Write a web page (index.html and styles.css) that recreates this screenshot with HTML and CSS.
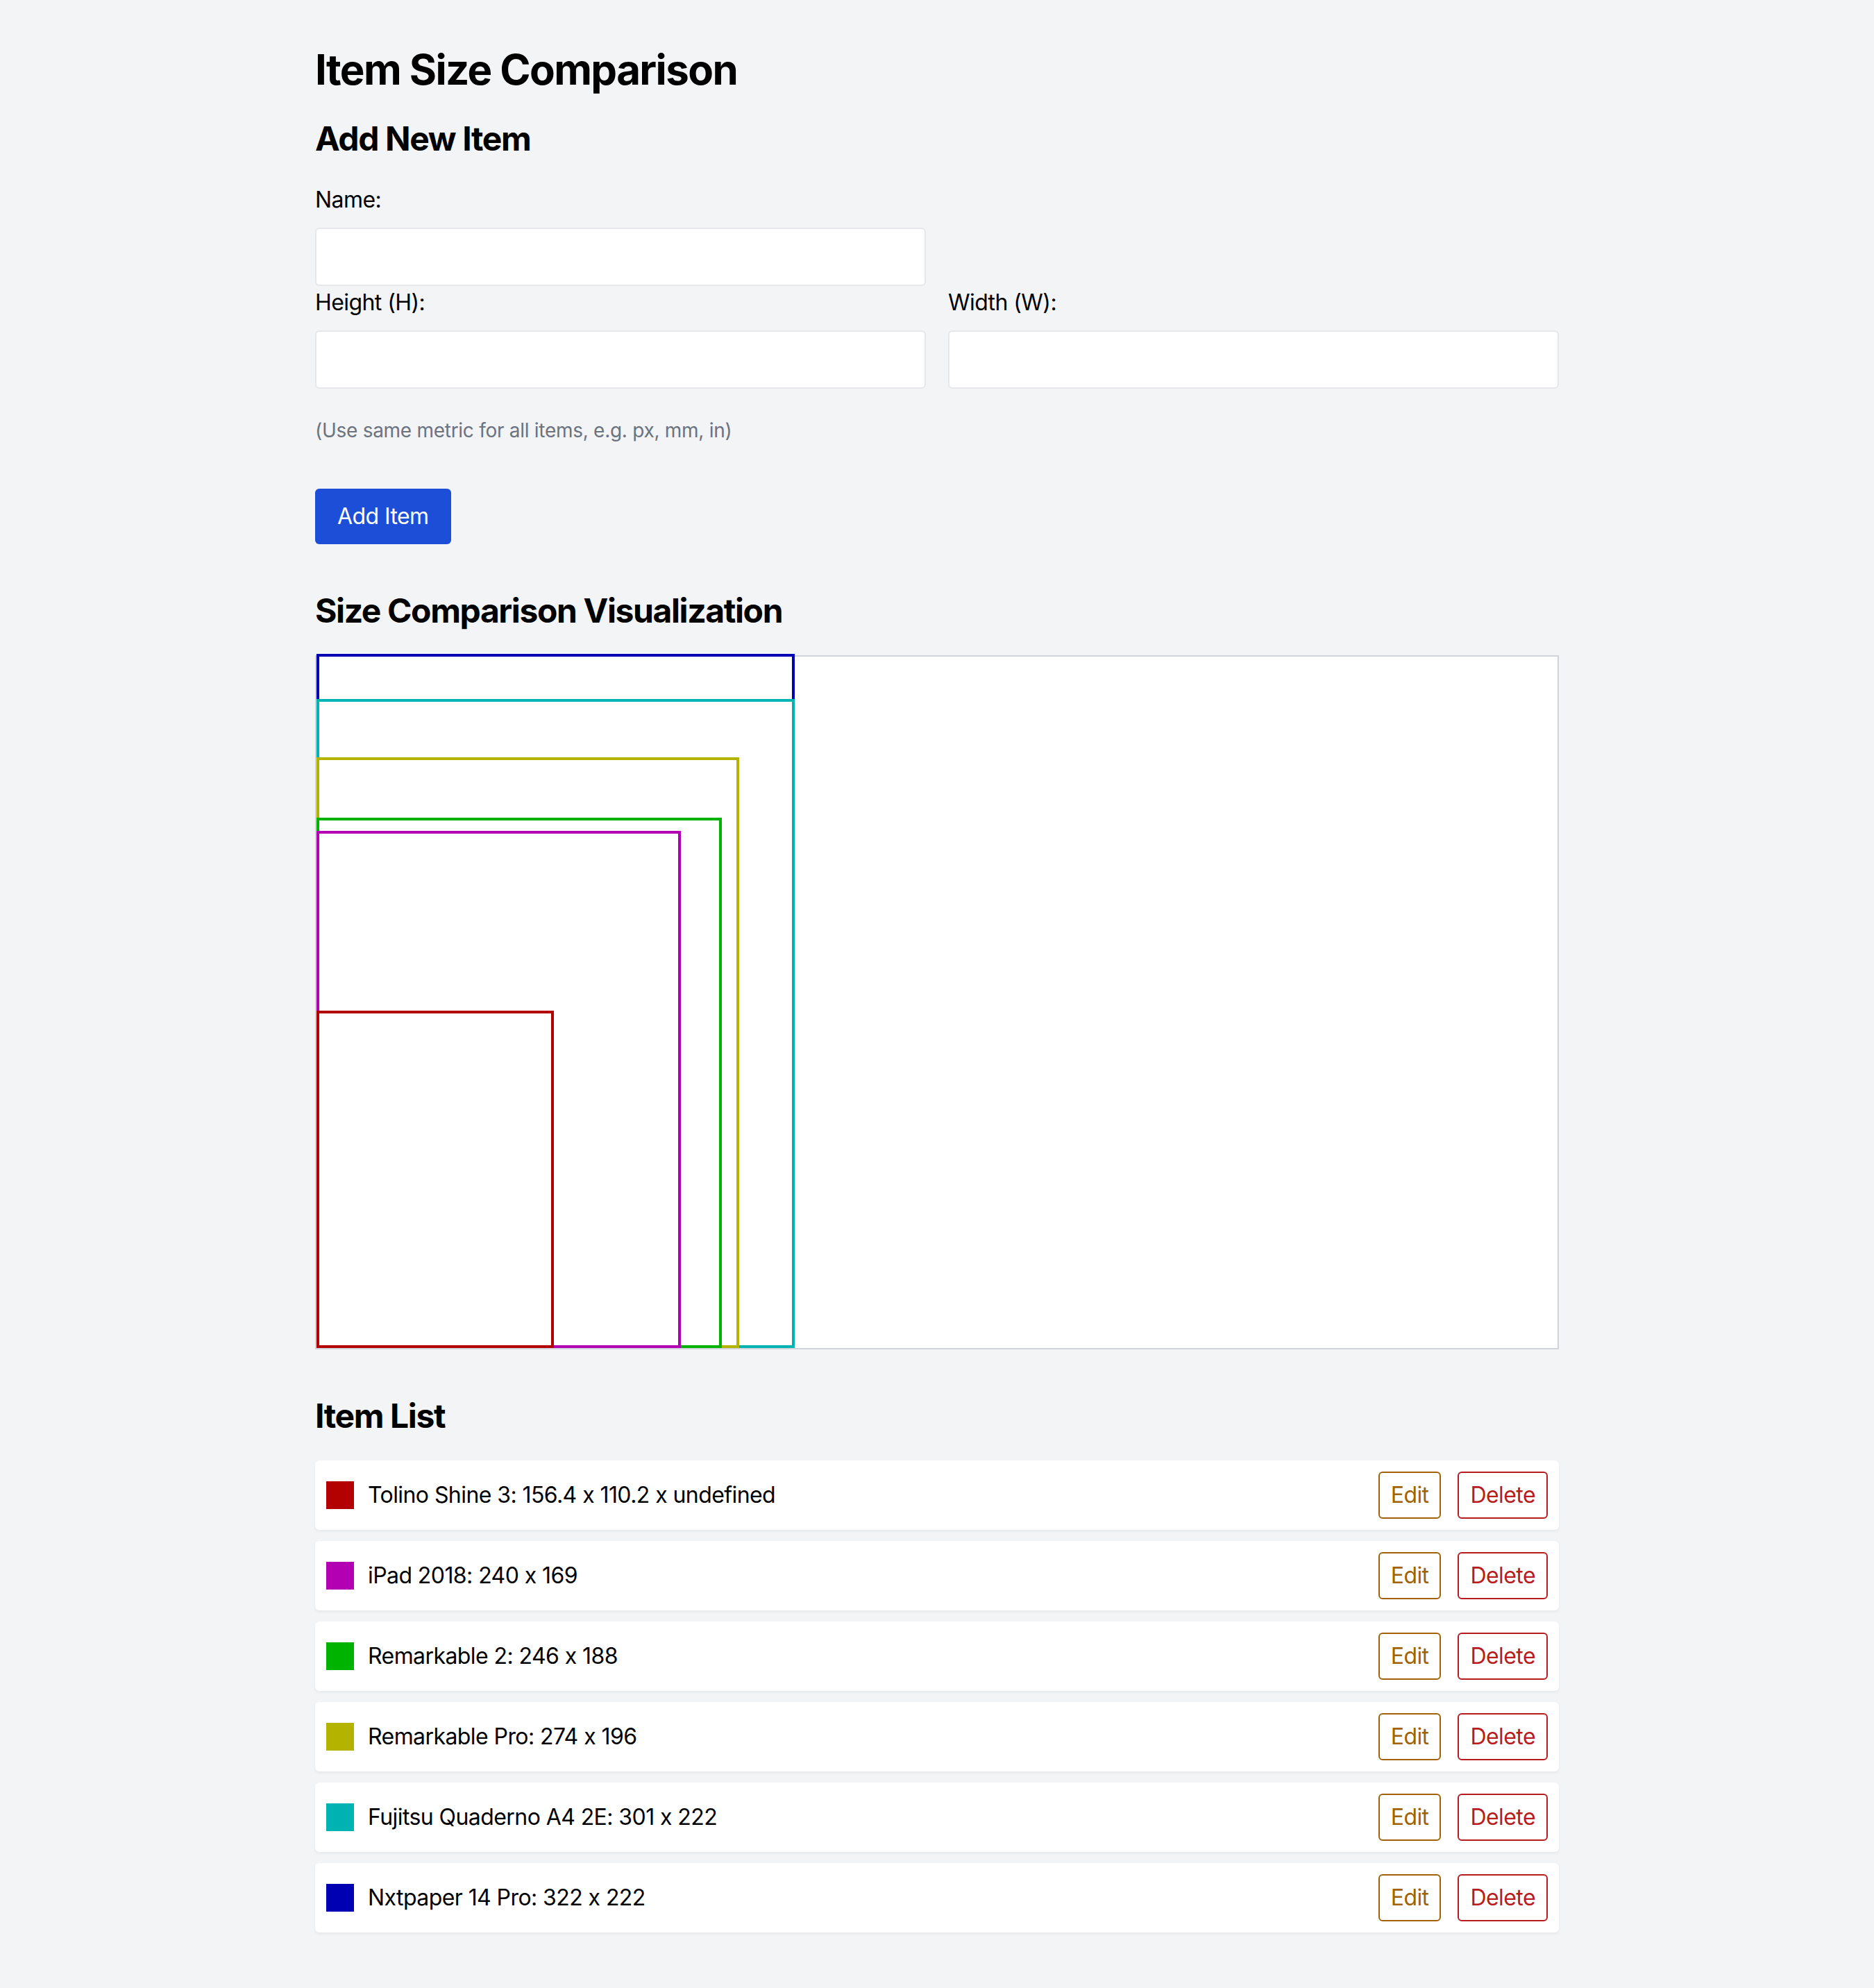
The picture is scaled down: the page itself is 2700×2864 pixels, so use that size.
FILE: index.html
```html
<!DOCTYPE html>
<html lang="en">
<head>
<meta charset="utf-8">
<title>Item Size Comparison</title>
<link rel="stylesheet" href="styles.css">
</head>
<body>
<main class="container">
  <h1 class="title">Item Size Comparison</h1>

  <section class="add-section">
    <h2 class="section-title">Add New Item</h2>
    <div class="form-grid">
      <div class="field">
        <label class="field-label" for="name">Name:</label>
        <input class="field-input" id="name" type="text">
      </div>
      <div class="field-spacer"></div>
      <div class="field">
        <label class="field-label" for="height">Height (H):</label>
        <input class="field-input" id="height" type="text">
      </div>
      <div class="field">
        <label class="field-label" for="width">Width (W):</label>
        <input class="field-input" id="width" type="text">
      </div>
    </div>
    <p class="hint">(Use same metric for all items, e.g. px, mm, in)</p>
    <button class="btn-primary" type="button">Add Item</button>
  </section>

  <section class="viz-section">
    <h2 class="section-title">Size Comparison Visualization</h2>
    <div class="viz-box">
      <div class="viz-rect" style="width:689.4px;height:1000px;border-color:rgb(0,0,179)"></div>
      <div class="viz-rect" style="width:689.4px;height:934.8px;border-color:rgb(0,179,179)"></div>
      <div class="viz-rect" style="width:608.7px;height:850.9px;border-color:rgb(179,179,0)"></div>
      <div class="viz-rect" style="width:583.9px;height:764px;border-color:rgb(0,179,0)"></div>
      <div class="viz-rect" style="width:524.8px;height:745.3px;border-color:rgb(179,0,179)"></div>
      <div class="viz-rect" style="width:342.2px;height:485.7px;border-color:rgb(179,0,0)"></div>
    </div>
  </section>

  <section class="list-section">
    <h2 class="section-title">Item List</h2>
    <ul class="item-list">
      <li class="item-card">
        <span class="swatch" style="background:rgb(179,0,0)"></span>
        <span class="item-text">Tolino Shine 3: 156.4 x 110.2 x undefined</span>
        <button class="btn-edit" type="button">Edit</button>
        <button class="btn-delete" type="button">Delete</button>
      </li>
      <li class="item-card">
        <span class="swatch" style="background:rgb(179,0,179)"></span>
        <span class="item-text">iPad 2018: 240 x 169</span>
        <button class="btn-edit" type="button">Edit</button>
        <button class="btn-delete" type="button">Delete</button>
      </li>
      <li class="item-card">
        <span class="swatch" style="background:rgb(0,179,0)"></span>
        <span class="item-text">Remarkable 2: 246 x 188</span>
        <button class="btn-edit" type="button">Edit</button>
        <button class="btn-delete" type="button">Delete</button>
      </li>
      <li class="item-card">
        <span class="swatch" style="background:rgb(179,179,0)"></span>
        <span class="item-text">Remarkable Pro: 274 x 196</span>
        <button class="btn-edit" type="button">Edit</button>
        <button class="btn-delete" type="button">Delete</button>
      </li>
      <li class="item-card">
        <span class="swatch" style="background:rgb(0,179,179)"></span>
        <span class="item-text">Fujitsu Quaderno A4 2E: 301 x 222</span>
        <button class="btn-edit" type="button">Edit</button>
        <button class="btn-delete" type="button">Delete</button>
      </li>
      <li class="item-card">
        <span class="swatch" style="background:rgb(0,0,179)"></span>
        <span class="item-text">Nxtpaper 14 Pro: 322 x 222</span>
        <button class="btn-edit" type="button">Edit</button>
        <button class="btn-delete" type="button">Delete</button>
      </li>
    </ul>
  </section>
</main>
</body>
</html>
```

FILE: styles.css
```css
* {
  box-sizing: border-box;
}

html {
  background: #f3f4f6;
}

body {
  margin: 0;
  background: #f3f4f6;
  color: #000;
  font-family: Inter, "Noto Sans", "Liberation Sans", sans-serif;
  font-feature-settings: "calt" 0;
  font-size: 32px;
  line-height: 48px;
  letter-spacing: -0.018em;
}

.container {
  width: 1792px;
  margin: 0 auto;
  padding: 64px 0 80px;
}

.title {
  margin: 0 0 32px;
  font-size: 60px;
  line-height: 72px;
  font-weight: 700;
  letter-spacing: -0.027em;
}

.section-title {
  margin: 0 0 32px;
  font-size: 48px;
  line-height: 64px;
  font-weight: 700;
  letter-spacing: -0.029em;
}

.form-grid {
  display: grid;
  grid-template-columns: 1fr 1fr;
  column-gap: 32px;
  row-gap: 0;
}

.field-label {
  display: block;
  margin-bottom: 16px;
  font-size: 32px;
  line-height: 48px;
}

.field-input {
  display: block;
  width: 100%;
  height: 84px;
  border: 2px solid #e5e7eb;
  border-radius: 6px;
  background: #fff;
  font: inherit;
  padding: 0 16px;
}

.hint {
  margin: 40px 0 64px;
  font-size: 28px;
  line-height: 40px;
  color: #6b7280;
  letter-spacing: -0.01em;
}

.btn-primary {
  height: 80px;
  padding: 0 32px;
  border: none;
  border-radius: 6px;
  background: #1d4ed8;
  color: #fff;
  font: inherit;
  font-size: 32px;
  line-height: 48px;
  letter-spacing: -0.018em;
}

.viz-section,
.list-section {
  margin-top: 64px;
}

.viz-box {
  position: relative;
  height: 1000px;
  border: 2px solid #d1d5db;
  background: #fff;
}

.viz-rect {
  position: absolute;
  left: 0;
  bottom: 0;
  border-width: 4px;
  border-style: solid;
  background: transparent;
}

.item-list {
  list-style: none;
  margin: 0;
  padding: 0;
  display: flex;
  flex-direction: column;
  gap: 16px;
}

.item-card {
  display: flex;
  align-items: center;
  height: 100px;
  padding: 0 16px;
  background: #fff;
  border-radius: 6px;
  box-shadow: 0 2px 4px rgba(0, 0, 0, 0.06);
}

.swatch {
  width: 40px;
  height: 40px;
  flex: none;
  margin-right: 20px;
}

.item-text {
  flex: 1;
}

.btn-edit,
.btn-delete {
  height: 68px;
  padding: 0 16px;
  border-width: 2px;
  border-style: solid;
  border-radius: 6px;
  background: transparent;
  font: inherit;
  font-size: 32px;
  line-height: 48px;
  letter-spacing: -0.018em;
}

.btn-edit {
  color: #a16207;
  border-color: #a16207;
}

.btn-delete {
  margin-left: 24px;
  color: #b91c1c;
  border-color: #b91c1c;
}
```
